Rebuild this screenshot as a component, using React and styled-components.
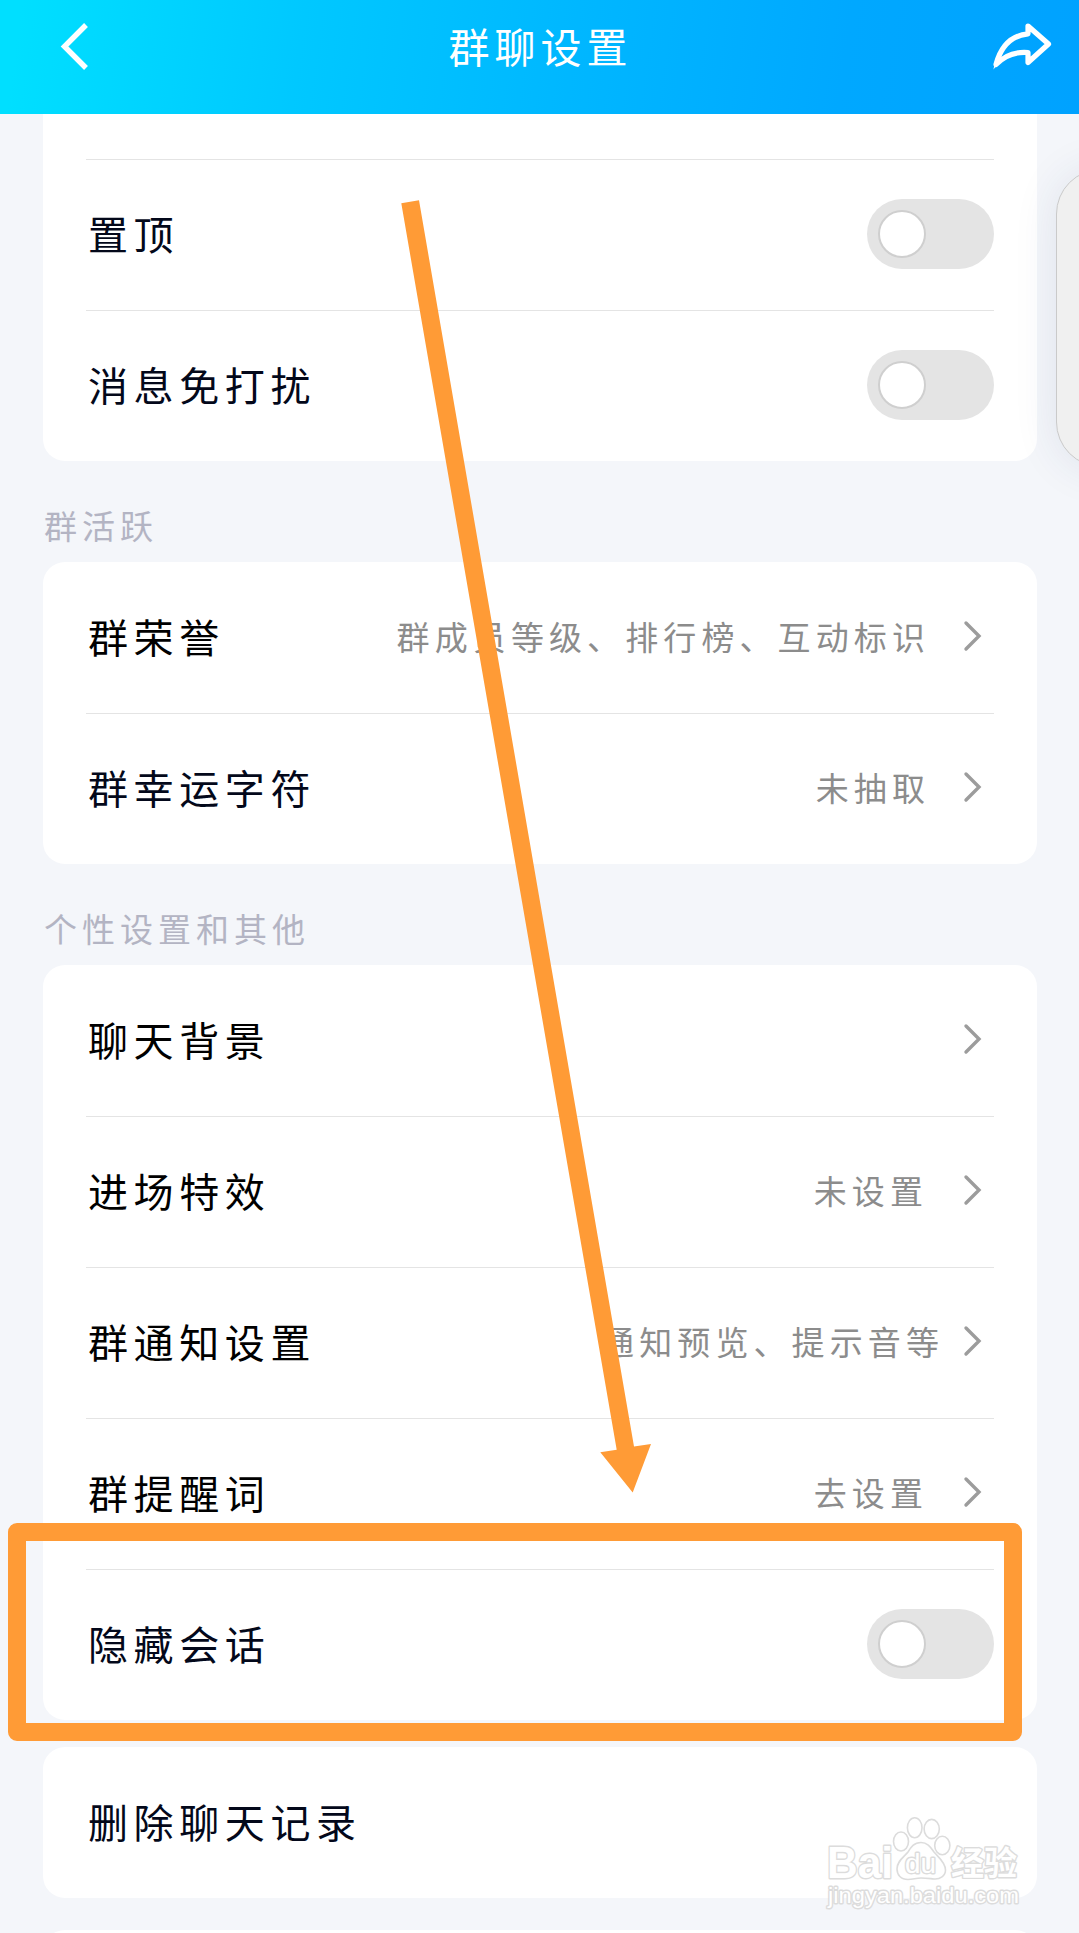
import React from "react";
import styled, { createGlobalStyle } from "styled-components";

const GlobalStyle = createGlobalStyle`
  * { box-sizing: border-box; }
  html, body { margin: 0; padding: 0; background: #f4f6fa; }
  body { font-family: "Noto Sans CJK SC", "Liberation Sans", sans-serif; }
`;

const Page = styled.div`
  position: relative;
  width: 1079px;
  height: 1933px;
  overflow: hidden;
  background: #f4f6fa;
  display: flex;
  flex-direction: column;
`;

const Header = styled.header`
  flex: none;
  height: 114px;
  padding: 0 25px 20px 60px;
  display: grid;
  grid-template-columns: 64px 1fr 64px;
  align-items: center;
  background: linear-gradient(98deg, #00dfff 2%, #00c8ff 28%, #00b7ff 53%, #00a8ff 78%, #00a2ff 100%);
`;

const Title = styled.h1`
  margin: 0 0 4px -33px;
  font-size: 41px;
  font-weight: 400;
  line-height: 50px;
  letter-spacing: 5px;
  text-align: center;
  color: #fff;
`;

const Content = styled.main`
  flex: none;
  display: flex;
  flex-direction: column;
  padding: 0 42px 0 43px;
`;

const Card = styled.section`
  flex: none;
  padding: ${(p) => (p.$clipped ? "45px" : "0")} 43px 0;
  border-radius: ${(p) => (p.$clipped ? "0 0 22px 22px" : "22px")};
  margin-bottom: ${(p) => p.$gap || 0}px;
  background: #fff;
`;

const SectionTitle = styled.h2`
  flex: none;
  height: 101px;
  margin: 0;
  padding: 39px 0 0 1px;
  font-size: 33px;
  font-weight: 400;
  line-height: 50px;
  letter-spacing: 5px;
  color: #b3b4c3;
`;

const Row = styled.div`
  height: 151px;
  display: flex;
  align-items: center;
  padding: 0 0 2px 2px;
  border-top: 1px solid ${(p) => (p.$divided ? "#e4e4e4" : "transparent")};
`;

const Label = styled.span`
  flex: 1;
  margin-bottom: 3px;
  font-size: 40px;
  font-weight: 400;
  line-height: 50px;
  letter-spacing: 5.6px;
  color: ${(p) => (p.$ink ? "#03081a" : "#000")};
`;

const Value = styled.span`
  margin: 0 ${(p) => p.$end}px 2px 0;
  font-size: 33px;
  font-weight: 400;
  line-height: 42px;
  letter-spacing: 5.1px;
  color: #8c8c8c;
`;

const ChevronIcon = styled.svg`
  width: 20px;
  height: 34px;
  margin: 0 12px 2px 0;
  fill: none;
  stroke: #9c9c9c;
  stroke-width: 3.4;
  stroke-linecap: round;
`;

const Switch = styled.span`
  width: 127px;
  height: 70px;
  padding: 11px;
  border-radius: 35px;
  background: #e4e4e4;
`;

const Knob = styled.span`
  display: block;
  width: 48px;
  height: 48px;
  border: 2px solid #cfcfcf;
  border-radius: 50%;
  background: #fff;
`;

const EdgePanel = styled.div`
  position: absolute;
  left: 1056px;
  top: 169px;
  width: 120px;
  height: 298px;
  border: 1.5px solid #cacaca;
  border-radius: 45px;
  background: #f0f0f0;
  box-shadow: 0 2px 44px rgba(40, 55, 110, 0.1);
`;

const Highlight = styled.div`
  position: absolute;
  left: 8px;
  top: 1523px;
  width: 1014px;
  height: 218px;
  border: 18px solid #ff9b36;
  border-radius: 9px;
`;

const ArrowLayer = styled.svg`
  position: absolute;
  left: 390px;
  top: 190px;
  width: 270px;
  height: 1310px;
  fill: #ff9b36;
`;

const Watermark = styled.svg`
  position: absolute;
  left: 820px;
  top: 1810px;
  width: 210px;
  height: 110px;
  fill: #fff;
  stroke: #dcdcdc;
  stroke-width: 1.6;
  text {
    paint-order: stroke fill;
    stroke-width: 2.8;
    stroke-linejoin: round;
  }
`;

function Chevron() {
  return (
    <ChevronIcon viewBox="0 0 20 34">
      <path d="M4 4 L17 17 L4 30" />
    </ChevronIcon>
  );
}

function ToggleRow({ label, divided }) {
  return (
    <Row $divided={divided}>
      <Label $ink>{label}</Label>
      <Switch role="switch" aria-checked="false">
        <Knob />
      </Switch>
    </Row>
  );
}

function LinkRow({ label, value, end = 32, ink, divided }) {
  return (
    <Row $divided={divided}>
      <Label $ink={ink}>{label}</Label>
      {value && <Value $end={end}>{value}</Value>}
      <Chevron />
    </Row>
  );
}

export default function App() {
  return (
    <Page>
      <GlobalStyle />
      <Header>
        <svg width="30" height="50" viewBox="0 0 30 50" fill="none" stroke="#fff" strokeWidth="5.4">
          <path d="M26 3 L4.500 24.500 L26 46" />
        </svg>
        <Title>群聊设置</Title>
        <svg width="64" height="56" viewBox="0 0 64 56" fill="none" stroke="#fff" strokeWidth="5.2" strokeLinejoin="round">
          <path d="M38 7 L58.500 25 L38 43.500 L38 33.500 C25 32.500 15 36 6 45.500 C11 27 21 16.500 38 14.800 Z" />
          <path d="M3.500 50.500 L5 42 L10 42 Z" fill="#fff" stroke="none" />
        </svg>
      </Header>

      <Content>
        <Card $clipped>
          <ToggleRow label="置顶" divided />
          <ToggleRow label="消息免打扰" divided />
        </Card>

        <SectionTitle>群活跃</SectionTitle>
        <Card>
          <LinkRow label="群荣誉" value="群成员等级、排行榜、互动标识" />
          <LinkRow label="群幸运字符" value="未抽取" ink divided />
        </Card>

        <SectionTitle>个性设置和其他</SectionTitle>
        <Card $gap={27}>
          <LinkRow label="聊天背景" />
          <LinkRow label="进场特效" value="未设置" end={34} divided />
          <LinkRow label="群通知设置" value="通知预览、提示音等" end={18} divided />
          <LinkRow label="群提醒词" value="去设置" end={34} divided />
          <ToggleRow label="隐藏会话" divided />
        </Card>

        <Card $gap={32}>
          <Row>
            <Label $ink>删除聊天记录</Label>
          </Row>
        </Card>

        <Card>
          <Row />
        </Card>
      </Content>

      <EdgePanel />

      <ArrowLayer viewBox="390 190 270 1310">
        <polygon points="401.300,203.300 419,200.300 634,1446.500 651,1444 632.700,1492.500 600.300,1452.300 616.700,1449.700" />
      </ArrowLayer>
      <Highlight />

      <Watermark viewBox="820 1810 210 110">
        <text x="827" y="1877.500" fontFamily="Liberation Sans, sans-serif" fontWeight="700" fontSize="45" textLength="66" lengthAdjust="spacingAndGlyphs">Bai</text>
        <ellipse cx="901" cy="1841.500" rx="7.500" ry="9.500" />
        <ellipse cx="914.700" cy="1827.700" rx="7.300" ry="10" />
        <ellipse cx="931.700" cy="1829" rx="7.600" ry="9.600" />
        <ellipse cx="942.300" cy="1845.500" rx="7.600" ry="9.300" />
        <path d="M921 1842.500 C928 1842.500 931 1848 934 1852 C938 1857 945.500 1862 945.500 1870 C945.500 1876 940 1879.500 934 1879 C929 1878.500 926 1878 921 1878 C916 1878 913 1879.500 908 1879.500 C901 1879.500 897 1875 897 1869 C897 1861 904 1857 908 1852 C911 1847 914 1842.500 921 1842.500 Z" />
        <text x="905" y="1873" fontFamily="Liberation Sans, sans-serif" fontSize="27" textLength="31" lengthAdjust="spacingAndGlyphs">du</text>
        <text x="951" y="1874.500" fontFamily="Noto Sans CJK SC, sans-serif" fontWeight="700" fontSize="33">经验</text>
        <text x="828" y="1903" fontFamily="Liberation Sans, sans-serif" fontSize="22.500" textLength="191" lengthAdjust="spacingAndGlyphs">jingyan.baidu.com</text>
      </Watermark>
    </Page>
  );
}
